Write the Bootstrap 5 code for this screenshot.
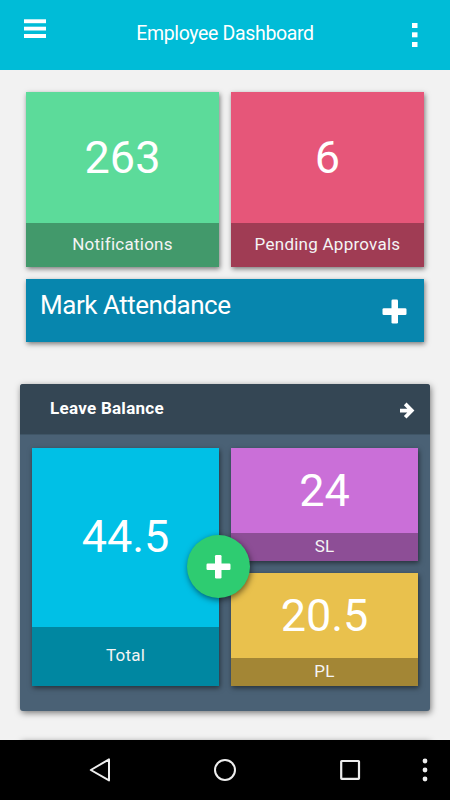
<!DOCTYPE html>
<html lang="en">
<head>
<meta charset="utf-8">
<meta name="viewport" content="width=device-width, initial-scale=1">
<title>Employee Dashboard</title>
<link href="https://cdn.jsdelivr.net/npm/bootstrap@5.3.0/dist/css/bootstrap.min.css" rel="stylesheet">
<style>
body{font-family:Roboto,"Liberation Sans",sans-serif;background:#f2f2f2;height:800px;overflow:hidden}
svg{display:block;flex:none}
.topbar{height:70px;background:#00bcd7;padding:0 31px 0 24px}
.topbar h1{font-size:19.5px;line-height:22px;letter-spacing:-.35px;margin:0 7px 3px 0}
.topbar .menu-icon{margin-bottom:13px}
.content-area{height:670px;padding:22px 20px 0}
.tiles{gap:12px;padding:0 6px}
.tile{box-shadow:1px 2px 5px rgba(0,0,0,.5);color:#fff}
.figure-num{font-size:45px;line-height:1;font-weight:400}
.tile-label{font-size:17px;line-height:20px;letter-spacing:.25px;color:#f4f4f4}
.tile-lg{height:174.6px}
.tile-lg .tile-label{height:43.6px;padding-bottom:2px}
.green{background:#5cdb9a}.green .tile-label{background:#42996b}
.pink{background:#e65679}.pink .tile-label{background:#a03c54}
.cyan{background:#00c0e6}.cyan .tile-label{background:#0087a1;height:59px;padding-bottom:3px}
.cyan .figure-num{padding-bottom:2px}
.purple{background:#ca6fd8}.purple .tile-label{background:#8d4e96}
.gold{background:#e9c14d}.gold .tile-label{background:#a38635}
.attendance{height:62.6px;margin:12.4px 6px 42.4px;background:#0786ae;padding:0 17px 0 14px}
.attendance h2{font-size:26px;line-height:30px;letter-spacing:-.48px;margin:0 0 10px}
.attendance svg{margin-top:2px}
.balance{height:326.6px;background:#4a6175;border-radius:3px;box-shadow:1px 2px 6px rgba(0,0,0,.5);overflow:hidden}
.balance-head{height:51px;background:#344654;padding:0 15px 0 30px;border-bottom:1px solid #3f5566}
.balance-head h2{font-size:17px;line-height:20px;letter-spacing:.27px;margin:0 0 2px}
.balance-head svg{margin-top:3px}
.balance-grid{padding:13px 12px 0;gap:12px;height:250.6px}
.tile-sm .tile-label{height:28px;padding-bottom:2px}
.add-btn{width:63px;height:63px;left:167px;top:151px;background:#2ecc71;box-shadow:1px 2px 6px rgba(0,0,0,.55);padding:0;border:0}
.next-panel{height:40px;margin-top:29.6px;border-radius:3px;box-shadow:1px 2px 6px rgba(0,0,0,.5);background:#344654}
.navkeys{height:60px;background:#000}
.key-back{margin-left:89px}.key-home{margin-left:103px}.key-recent{margin-left:103px}.key-more{margin-left:60px}
</style>
<script src="https://cdn.jsdelivr.net/npm/bootstrap@5.3.0/dist/js/bootstrap.bundle.min.js"></script>
</head>
<body class="d-flex flex-column">
<header class="topbar d-flex align-items-center justify-content-between text-white flex-shrink-0">
  <svg class="menu-icon" width="22" height="20" fill="#fff"><rect y=".3" width="22" height="3.9"/><rect y="7.7" width="22" height="3.8"/><rect y="15" width="22" height="4"/></svg>
  <h1 class="fw-normal">Employee Dashboard</h1>
  <svg class="more-icon" width="8" height="26" fill="#fff"><rect x="1" y="1" width="5.5" height="5"/><rect x="1" y="10.3" width="5.5" height="5"/><rect x="1" y="20" width="5.5" height="5"/></svg>
</header>
<main class="content-area overflow-hidden">
  <div class="tiles d-flex">
    <div class="tile tile-lg green d-flex flex-column flex-fill w-50">
      <div class="figure-num flex-fill d-flex align-items-center justify-content-center">263</div>
      <div class="tile-label d-flex align-items-center justify-content-center">Notifications</div>
    </div>
    <div class="tile tile-lg pink d-flex flex-column flex-fill w-50">
      <div class="figure-num flex-fill d-flex align-items-center justify-content-center">6</div>
      <div class="tile-label d-flex align-items-center justify-content-center">Pending Approvals</div>
    </div>
  </div>
  <div class="attendance tile d-flex align-items-center justify-content-between">
    <h2 class="fw-normal">Mark Attendance</h2>
    <svg width="25" height="25" fill="#fff"><rect x="9.5" y=".5" width="6.5" height="24" rx="1.3"/><rect x=".5" y="9.3" width="24" height="6.7" rx="1.3"/></svg>
  </div>
  <section class="balance position-relative">
    <div class="balance-head d-flex align-items-center justify-content-between text-white">
      <h2 class="fw-bold">Leave Balance</h2>
      <svg width="16" height="18" fill="none" stroke="#fff" stroke-width="3.7"><path d="M1 9.6H12M6.2 2.9l6.6 6.7-6.6 6.7"/></svg>
    </div>
    <div class="balance-grid d-flex">
      <div class="tile cyan d-flex flex-column w-50">
        <div class="figure-num flex-fill d-flex align-items-center justify-content-center">44.5</div>
        <div class="tile-label d-flex align-items-center justify-content-center">Total</div>
      </div>
      <div class="d-flex flex-column w-50">
        <div class="tile tile-sm purple d-flex flex-column flex-fill mb-2">
          <div class="figure-num flex-fill d-flex align-items-center justify-content-center">24</div>
          <div class="tile-label d-flex align-items-center justify-content-center">SL</div>
        </div>
        <div class="tile tile-sm gold d-flex flex-column flex-fill mt-1">
          <div class="figure-num flex-fill d-flex align-items-center justify-content-center">20.5</div>
          <div class="tile-label d-flex align-items-center justify-content-center">PL</div>
        </div>
      </div>
    </div>
    <button class="add-btn rounded-circle position-absolute d-flex align-items-center justify-content-center" type="button" aria-label="Add leave">
      <svg width="25" height="26" fill="#fff"><rect x="9" y="2" width="6.5" height="23.5" rx="1.2"/><rect x=".5" y="10.5" width="24" height="6.5" rx="1.2"/></svg>
    </button>
  </section>
  <div class="next-panel"></div>
</main>
<nav class="navkeys d-flex align-items-center flex-shrink-0">
  <svg class="key-back" width="22" height="26" fill="none" stroke="#eee" stroke-width="2" stroke-linejoin="round"><path d="M20 2.4v21L1.8 13z"/></svg>
  <svg class="key-home" width="22" height="22" fill="none" stroke="#eee" stroke-width="2"><circle cx="11" cy="11" r="10"/></svg>
  <svg class="key-recent" width="22" height="22" fill="none" stroke="#eee" stroke-width="2.2"><rect x="2.2" y="2" width="17.8" height="17.8" rx=".5"/></svg>
  <svg class="key-more" width="8" height="26" fill="#eee"><circle cx="4" cy="4" r="2.4"/><circle cx="4" cy="13" r="2.4"/><circle cx="4" cy="22" r="2.4"/></svg>
</nav>
</body>
</html>
